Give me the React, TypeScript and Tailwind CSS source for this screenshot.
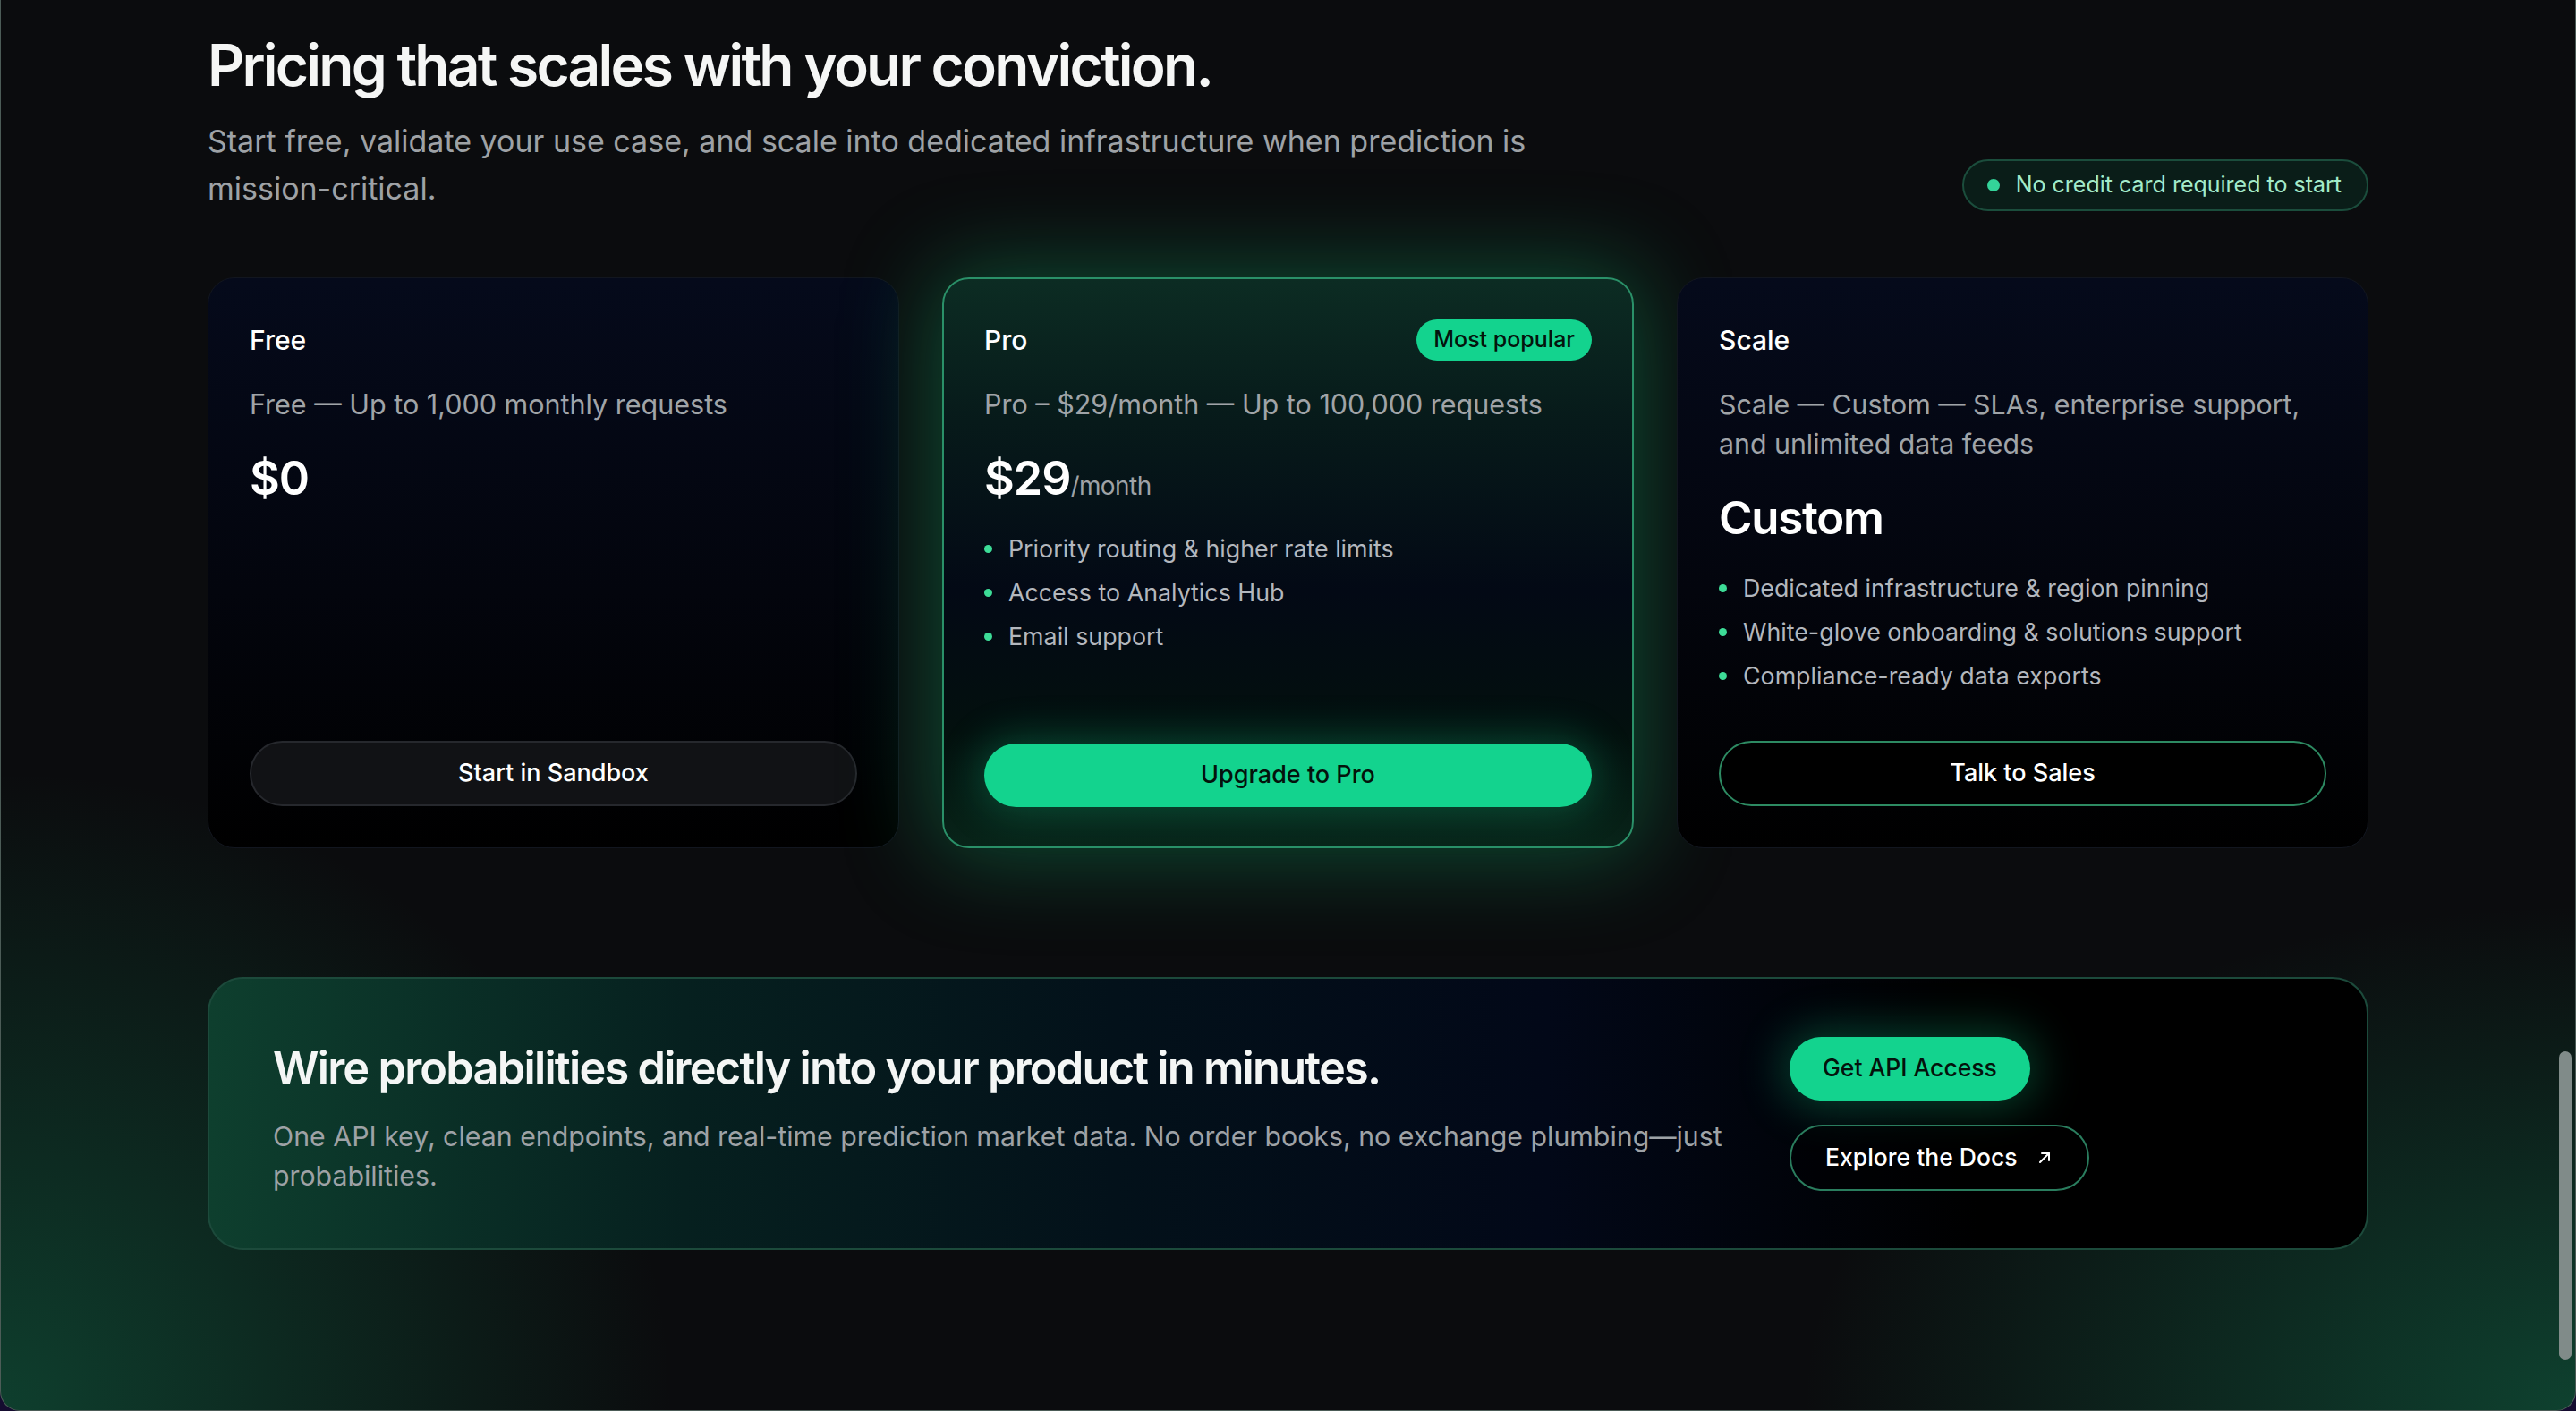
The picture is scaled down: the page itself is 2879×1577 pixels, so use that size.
import React from "react";

function Dot() {
  return <span className="w-[9px] h-[9px] rounded-full bg-[#3ddc97] shrink-0" />;
}

function Bullets({ items }: { items: string[] }) {
  return (
    <ul className="mt-[23px] flex flex-col">
      {items.map((t) => (
        <li key={t} className="flex items-center gap-[18px] text-[26.8px] leading-[49px] text-[#b3b7bd]">
          <Dot />
          <span>{t}</span>
        </li>
      ))}
    </ul>
  );
}

export default function App() {
  return (
    <div className="w-[2879px] h-[1577px] bg-[#150c30] font-['Inter','Noto_Sans',sans-serif]">
      <div className="relative h-full w-full overflow-hidden rounded-b-[22px] border-x border-b border-[#4c5c57] bg-[#0b0c0e] bg-[radial-gradient(ellipse_1000px_950px_at_0%_100%,rgba(18,118,80,0.48),transparent_75%),radial-gradient(ellipse_1150px_750px_at_100%_100%,rgba(18,118,80,0.5),transparent_75%)]">
        <div className="mx-auto w-[2415px] pt-[38px]">
          {/* Header */}
          <div className="flex items-end justify-between">
            <div>
              <h1 className="text-[64px] leading-[70px] font-semibold tracking-[-0.043em] text-[#f5f6f5]">
                Pricing that scales with your conviction.
              </h1>
              <p className="mt-[23px] max-w-[1600px] text-[34px] leading-[53px] text-[#9ea2a6]">
                Start free, validate your use case, and scale into dedicated infrastructure when prediction is mission-critical.
              </p>
            </div>
            <div className="mb-[1px] flex h-[58px] items-center gap-[18px] rounded-full border-[2px] border-[#1b4d3c] bg-[#0a1d18] pl-[26px] pr-[28px]">
              <span className="h-[14px] w-[14px] rounded-full bg-[#34d399]" />
              <span className="text-[25px] text-[#a3ebcb]">No credit card required to start</span>
            </div>
          </div>

          {/* Cards */}
          <div className="mt-[73px] grid grid-cols-3 gap-[48px]">
            {/* Free */}
            <div className="flex h-[638px] flex-col rounded-[30px] border border-[#12161f] bg-[linear-gradient(180deg,#050a1b_0%,#03050d_55%,#000000_100%)] p-[46px]">
              <div className="flex h-[46px] items-center">
                <span className="text-[30px] font-medium text-white">Free</span>
              </div>
              <p className="mt-[27px] text-[30.5px] leading-[44px] text-[#a0a4a8]">Free — Up to 1,000 monthly requests</p>
              <div className="mt-[30px] text-[52px] leading-[62px] font-semibold tracking-[-0.02em] text-white">$0</div>
              <button className="mt-auto h-[73px] w-full rounded-full border-[2px] border-[#26282d] bg-[#111215] text-[27px] font-medium text-white">
                Start in Sandbox
              </button>
            </div>

            {/* Pro */}
            <div className="flex h-[638px] flex-col rounded-[30px] border-[2px] border-[#2a9068] bg-[linear-gradient(180deg,#0c2c23_0%,#071a1a_25%,#030915_55%,#03100e_80%,#082419_100%)] p-[45px] shadow-[0_0_100px_10px_rgba(20,170,105,0.4)]">
              <div className="flex h-[46px] items-center justify-between">
                <span className="text-[30px] font-medium text-white">Pro</span>
                <span className="flex h-[46px] items-center rounded-full bg-[#13d38e] px-[19px] text-[25px] font-medium text-[#04140d]">
                  Most popular
                </span>
              </div>
              <p className="mt-[27px] text-[30.5px] leading-[44px] text-[#a0a4a8]">Pro – $29/month — Up to 100,000 requests</p>
              <div className="mt-[30px] text-[52px] leading-[62px]">
                <span className="font-semibold tracking-[-0.02em] text-white">$29</span>
                <span className="text-[28px] leading-none tracking-[-0.02em] text-[#9ea2a6]">/month</span>
              </div>
              <Bullets items={["Priority routing & higher rate limits", "Access to Analytics Hub", "Email support"]} />
              <button className="mt-auto mb-[-1px] h-[71px] w-full rounded-full bg-[#13d38e] text-[27px] font-medium text-[#04120c] shadow-[0_0_46px_6px_rgba(19,211,142,0.28)]">
                Upgrade to Pro
              </button>
            </div>

            {/* Scale */}
            <div className="flex h-[638px] flex-col rounded-[30px] border border-[#12161f] bg-[linear-gradient(180deg,#050a1b_0%,#03050d_55%,#000000_100%)] p-[46px]">
              <div className="flex h-[46px] items-center">
                <span className="text-[30px] font-medium text-white">Scale</span>
              </div>
              <p className="mt-[27px] text-[30.3px] leading-[44px] text-[#a0a4a8]">
                Scale — Custom — SLAs, enterprise support, and unlimited data feeds
              </p>
              <div className="mt-[30px] text-[51px] leading-[62px] font-semibold tracking-[-0.025em] text-white">Custom</div>
              <Bullets
                items={[
                  "Dedicated infrastructure & region pinning",
                  "White-glove onboarding & solutions support",
                  "Compliance-ready data exports",
                ]}
              />
              <button className="mt-auto h-[73px] w-full rounded-full border-[2px] border-[#2d8a62] bg-black text-[27px] font-medium text-white">
                Talk to Sales
              </button>
            </div>
          </div>

          {/* CTA banner */}
          <div className="mt-[144px] flex h-[305px] items-center gap-[40px] rounded-[40px] border-[2px] border-[#1c4a3b] bg-[linear-gradient(90deg,#0e3f2e_0%,#06201f_22%,#03111a_42%,#020818_62%,#000000_82%)] pl-[71px]">
            <div className="mt-[10px] w-[1655px]">
              <h2 className="text-[50.5px] leading-[60px] font-semibold tracking-[-0.035em] text-[#f4f6f5]">
                Wire probabilities directly into your product in minutes.
              </h2>
              <p className="mt-[24px] text-[30.3px] leading-[44px] text-[#9ea2a6]">
                One API key, clean endpoints, and real-time prediction market data. No order books, no exchange plumbing—just probabilities.
              </p>
            </div>
            <div className="flex flex-col items-start gap-[27px]">
              <button className="h-[71px] rounded-full bg-[#13d38e] px-[37px] text-[26.5px] font-medium text-[#04120c] shadow-[0_0_50px_8px_rgba(19,211,142,0.3)]">
                Get API Access
              </button>
              <button className="flex h-[74px] items-center gap-[20px] rounded-full border-[2px] border-[#2a7d5e] bg-black/40 px-[38px] text-[26.5px] font-medium text-white">
                Explore the Docs
                <svg width="20" height="20" viewBox="0 0 20 20" fill="none" stroke="currentColor" strokeWidth="2" strokeLinecap="round" strokeLinejoin="round">
                  <path d="M5 15 L15 5" />
                  <path d="M7 5 H15 V13" />
                </svg>
              </button>
            </div>
          </div>
        </div>

        {/* scrollbar thumb */}
        <div className="absolute right-[4px] top-[1175px] h-[345px] w-[14px] rounded-full bg-[#808b89]" />
      </div>
    </div>
  );
}
